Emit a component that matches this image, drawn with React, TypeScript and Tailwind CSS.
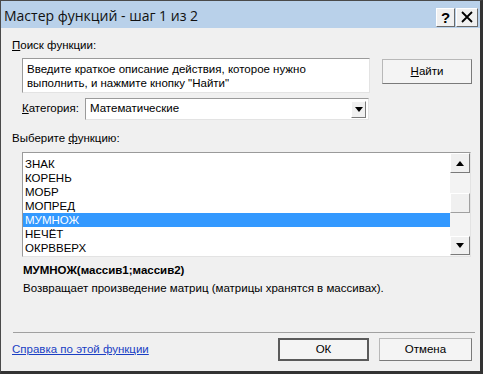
import React from "react";

const font = { fontFamily: '"Liberation Sans", Arial, sans-serif' };

function Tri({ up }: { up?: boolean }) {
  return (
    <svg width="8" height="5" viewBox="0 0 8 5">
      {up ? <path d="M0 5 L4 0 L8 5 Z" fill="#000" /> : <path d="M0 0 L8 0 L4 5 Z" fill="#000" />}
    </svg>
  );
}

export default function App() {
  const items = ["ЗНАК", "КОРЕНЬ", "МОБР", "МОПРЕД", "МУМНОЖ", "НЕЧЁТ", "ОКРВВЕРХ"];
  return (
    <div
      className="w-[483px] h-[374px] bg-[#f0f0f0] border-l border-t border-l-[#4a4a4a] border-t-[#4a4a4a] border-r-[3px] border-b-[3px] border-r-[#333] border-b-[#333] flex flex-col text-[11.5px] text-black overflow-hidden"
      style={font}
    >
      {/* Title bar */}
      <div className="h-[27px] bg-[#b9d1ea] flex items-center pl-[3px] pr-[2px] shrink-0">
        <div className="flex-1 text-[14px] text-[#111] pt-[2px]" style={{ fontFamily: '"Open Sans", "Noto Sans", sans-serif' }}>
          Мастер функций - шаг 1 из 2
        </div>
        <div className="flex mt-[5px]">
          <div className="w-[19px] h-[19px] bg-[#f0f0f0] border-t border-l border-white border-r border-b border-r-[#6a6a6a] border-b-[#6a6a6a] flex items-center justify-center font-bold text-[15px] leading-none">
            ?
          </div>
          <div className="w-[22px] h-[19px] ml-[1px] bg-[#f0f0f0] border-t border-l border-white border-r border-b border-r-[#6a6a6a] border-b-[#6a6a6a] flex items-center justify-center">
            <svg width="12" height="12" viewBox="0 0 12 12">
              <path d="M1 1 L11 11 M11 1 L1 11" stroke="#000" strokeWidth="1.8" />
            </svg>
          </div>
        </div>
      </div>

      {/* Body */}
      <div className="flex-1 flex flex-col pl-[11px] pr-[8px]">
        <div className="mt-[10px] leading-[14px]">
          <span className="underline">П</span>оиск функции:
        </div>

        <div className="flex mt-[6px] ml-[10px] items-start">
          <div className="w-[348px] h-[35px] bg-white border border-t-[#9a9a9a] border-l-[#9a9a9a] border-r-[#e3e3e3] border-b-[#e3e3e3] pl-[4px] pt-[3px] leading-[14px]">
            Введите краткое описание действия, которое нужно
            <br />
            выполнить, и нажмите кнопку "Найти"
          </div>
          <div className="ml-[12px] mt-[1px] w-[90px] h-[25px] bg-[#f4f4f4] border border-[#b8b8b8] border-r-[#7a7a7a] border-b-[#7a7a7a] flex items-center justify-center">
            <span>
              <span className="underline">Н</span>айти
            </span>
          </div>
        </div>

        <div className="flex mt-[5px] ml-[10px] items-center h-[22px]">
          <div className="w-[63px]">
            <span className="underline">К</span>атегория:
          </div>
          <div className="w-[284px] h-[22px] bg-white border border-t-[#9a9a9a] border-l-[#9a9a9a] border-r-[#e3e3e3] border-b-[#e3e3e3] flex items-center pl-[4px] pr-[2px]">
            <div className="flex-1">Математические</div>
            <div className="w-[15px] h-[17px] bg-[#f0f0f0] border border-t-white border-l-white border-r-[#7a7a7a] border-b-[#7a7a7a] flex items-center justify-center">
              <Tri />
            </div>
          </div>
        </div>

        <div className="mt-[11px] leading-[14px]">
          Выберите <span className="underline">ф</span>ункцию:
        </div>

        <div className="mt-[7px] ml-[10px] w-[449px] h-[105px] bg-white border border-t-[#9a9a9a] border-l-[#9a9a9a] border-r-[#e3e3e3] border-b-[#e3e3e3] flex">
          <div className="flex-1 pt-[4px]">
            {items.map((it) => (
              <div
                key={it}
                className={
                  "h-[14px] leading-[14px] pl-[2px] " + (it === "МУМНОЖ" ? "bg-[#3399ff] text-white" : "")
                }
              >
                {it}
              </div>
            ))}
          </div>
          <div className="w-[20px] bg-[#f3f3f3] flex flex-col">
            <div className="h-[20px] bg-[#f0f0f0] border border-t-white border-l-white border-r-[#7a7a7a] border-b-[#7a7a7a] flex items-center justify-center">
              <Tri up />
            </div>
            <div className="h-[20px] mt-[20px] bg-[#f0f0f0] border border-t-white border-l-white border-r-[#a0a0a0] border-b-[#a0a0a0]" />
            <div className="flex-1" />
            <div className="h-[19px] mb-[1px] bg-[#f0f0f0] border border-t-white border-l-white border-r-[#7a7a7a] border-b-[#7a7a7a] flex items-center justify-center">
              <Tri />
            </div>
          </div>
        </div>

        <div className="mt-[6px] ml-[11px] leading-[14px] font-bold">МУМНОЖ(массив1;массив2)</div>
        <div className="mt-[4px] ml-[11px] leading-[14px]">
          Возвращает произведение матриц (матрицы хранятся в массивах).
        </div>

        <div className="mt-[37px] ml-[1px] h-[1px] bg-[#a0a0a0] w-[462px]" />

        <div className="flex items-center mt-[5px]">
          <div className="flex-1 text-[#1a3fc4] underline">Справка по этой функции</div>
          <div className="w-[91px] h-[23px] bg-[#f4f4f4] border-2 border-[#5a5a5a] flex items-center justify-center">
            ОК
          </div>
          <div className="ml-[10px] w-[93px] h-[23px] bg-[#f4f4f4] border border-[#b8b8b8] border-r-[#7a7a7a] border-b-[#7a7a7a] flex items-center justify-center">
            Отмена
          </div>
        </div>
      </div>
    </div>
  );
}
